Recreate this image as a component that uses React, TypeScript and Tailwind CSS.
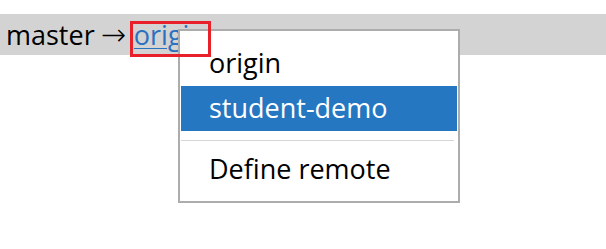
export default function App() {
  return (
    <div className="relative h-[249px] w-[606px] overflow-hidden bg-white font-['Open_Sans',sans-serif] text-black">
      <div className="mt-[14px] flex h-[41px] items-center bg-[#d3d3d3] pl-[6px] text-[27px] leading-none">
        <span>master</span>
        <span className="ml-[6px] font-['DejaVu_Sans',sans-serif] text-[30px] font-light">→</span>
        <a className="ml-[8px] text-[#2a71bf] underline decoration-1 underline-offset-[3px]">origin</a>
      </div>

      {/* remote picker */}
      <div className="absolute left-[178px] top-[29px] flex h-[174px] w-[282px] flex-col border-2 border-[#acacac] bg-white px-px pt-[10px] text-[27px] leading-none">
        <div className="flex h-[45px] items-center pb-[3px] pl-[28px]">origin</div>
        <div className="flex h-[45px] items-center bg-[#2677c2] pb-[2px] pl-[28px] text-white">student-demo</div>
        <div className="flex h-[18px] items-center pr-[3px]">
          <div className="h-px w-full bg-[#d6d6d6]" />
        </div>
        <div className="flex h-[45px] items-center pb-[7px] pl-[28px]">Define remote</div>
      </div>

      <div className="absolute left-[130px] top-[21px] h-[36px] w-[81px] border-[3px] border-[#e8202a]" />
    </div>
  )
}
